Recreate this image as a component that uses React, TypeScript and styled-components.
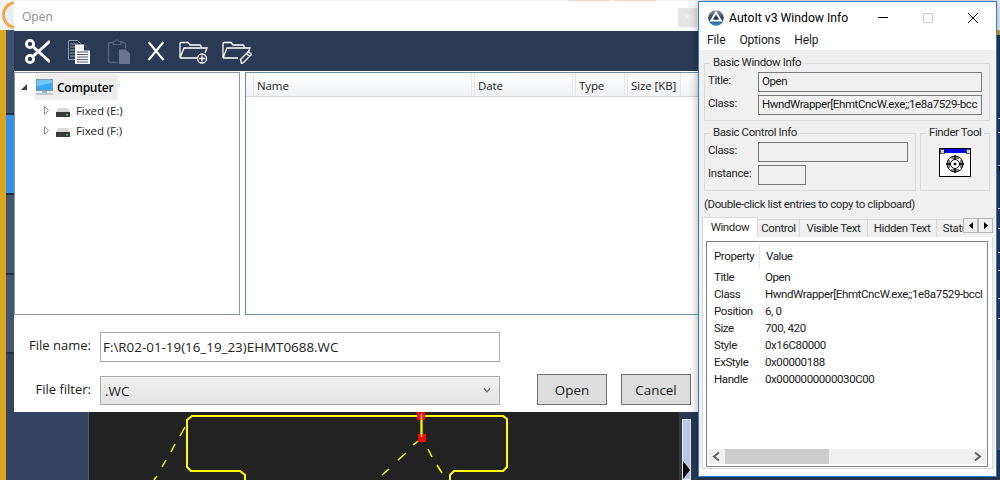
import React from "react";
import styled, { createGlobalStyle } from "styled-components";

const GlobalStyle = createGlobalStyle`
  html, body {
    margin: 0;
    padding: 0;
    background: #2a3954;
  }
  * {
    box-sizing: border-box;
  }
`;

const Desktop = styled.div`
  position: relative;
  width: 1000px;
  height: 480px;
  overflow: hidden;
  font-family: "Open Sans", "Noto Sans", sans-serif;
  font-size: 12px;
  color: #1a1a1a;
`;

/* the application behind the two windows */
const Backdrop = styled.div`
  width: 100%;
  height: 100%;
  display: grid;
  grid-template-columns: 6px 83px 590px 1fr;
  grid-template-rows: 30px 1fr;
`;
const TopStrip = styled.div`
  grid-column: 1 / -1;
  position: relative;
  background: #f4f4f4;
  overflow: hidden;
`;
const AppLogo = styled.div`
  width: 28px;
  height: 28px;
  margin: 1px 0 0 2px;
  border-radius: 50%;
  border: 3px solid #f0a848;
  background: #e8eef2;
`;
const TopTabs = styled.div`
  position: absolute;
  left: 568px;
  top: 0;
  display: flex;
  gap: 4px;
`;
const TopTab = styled.div`
  width: 42px;
  height: 1px;
  background: #f2d6c4;
`;
const GoldBar = styled.div`
  background: #daa520;
`;
const SideBar = styled.div`
  display: flex;
  flex-direction: column;
  background: linear-gradient(#2b3a55, #34435f 60px);
  border-right: 1px solid #4a5a78;
`;
const SideItem = styled.div<{ $height: number; $color: string }>`
  height: ${(p) => p.$height}px;
  background: ${(p) => p.$color};
  border-bottom: 2px solid #25324a;
`;
const Canvas = styled.div`
  background: #222222;
`;
const Rail = styled.div`
  display: flex;
  background: #2a3954;
  border-left: 2px solid #3a3a3a;
  padding-left: 1px;
`;
const RailThumb = styled.div`
  position: relative;
  width: 9px;
  height: 61px;
  margin-top: 389px;
  background: #b9c9e6;
  border: 1px solid #e4e9f4;
`;
const RailArrow = styled.div`
  position: absolute;
  left: 0;
  bottom: 0;
  border-left: 7px solid #000000;
  border-top: 9px solid transparent;
  border-bottom: 9px solid transparent;
`;
const EdgeMarks = styled.svg`
  margin-left: auto;
  width: 3px;
  height: 450px;
  flex: none;
`;

/* open dialog */
const Dialog = styled.div`
  position: absolute;
  left: 14px;
  top: 1px;
  width: 684px;
  height: 411px;
  display: flex;
  flex-direction: column;
  background: #ffffff;
`;
const DialogTitle = styled.div`
  height: 30px;
  flex: none;
  display: flex;
  align-items: center;
  justify-content: space-between;
  padding: 0 1px 0 8px;
  font-size: 12px;
  color: #8e8e8e;
`;
const DialogClose = styled.div`
  width: 19px;
  height: 19px;
  margin-top: 3px;
  background: #e5e5e5;
  color: #f6f6f6;
  font-size: 11px;
  line-height: 18px;
  text-align: center;
`;
const Toolbar = styled.div`
  height: 40px;
  flex: none;
  display: flex;
  align-items: center;
  gap: 14px;
  padding-left: 11px;
  background: #2a3954;
`;
const Panes = styled.div`
  height: 244px;
  flex: none;
  display: flex;
  gap: 5px;
  padding-top: 1px;
`;
const TreePane = styled.div`
  width: 226px;
  flex: none;
  padding: 1px 0 0 6px;
  border: 1px solid #8d96a6;
`;
const ListPane = styled.div`
  flex: 1;
  border: 1px solid #6a8db3;
  border-right: 0;
`;
const TreeRoot = styled.div`
  display: flex;
  align-items: center;
`;
const RootArrow = styled.div`
  width: 0;
  height: 0;
  margin-right: 8px;
  border-left: 6px solid transparent;
  border-bottom: 6px solid #404040;
`;
const RootLabel = styled.div`
  width: 83px;
  height: 26px;
  display: flex;
  align-items: center;
  gap: 4px;
  padding-left: 1px;
  background: #eeeeee;
  font-weight: 600;
  color: #000000;
  font-size: 12px;
  letter-spacing: -0.25px;
`;
const TreeChild = styled.div`
  height: 20px;
  display: flex;
  align-items: center;
  padding-left: 23px;
  color: #222222;
  font-size: 11.5px;
  letter-spacing: -0.1px;
`;
const ChildArrow = styled.svg`
  width: 5px;
  height: 9px;
  margin-right: 7px;
`;
const DriveIcon = styled.svg`
  width: 14px;
  height: 10px;
  margin-right: 6px;
  margin-top: 3px;
`;
const ListHeader = styled.div`
  height: 24px;
  display: flex;
  gap: 2px;
  padding-left: 7px;
  background: linear-gradient(#ffffff, #f0f1f3);
  border-bottom: 1px solid #d6d6d6;
`;
const HeaderCell = styled.div<{ $width: number }>`
  width: ${(p) => p.$width}px;
  display: flex;
  align-items: center;
  padding: 2px 0 0 3px;
  color: #222222;
  border-left: 1px solid #e6e6e6;
  border-right: 1px solid #e6e6e6;
  font-size: 11.5px;
  letter-spacing: -0.1px;
  white-space: nowrap;
`;
const DialogFooter = styled.div`
  display: grid;
  grid-template-columns: 77px 400px 98px 75px;
  grid-template-rows: 30px 29px;
  column-gap: 9px;
  row-gap: 14px;
  padding-top: 17px;
`;
const FieldLabel = styled.label`
  align-self: center;
  text-align: right;
  font-size: 13px;
  margin-top: -4px;
  color: #1a1a1a;
`;
const FileInput = styled.div`
  grid-column: 2 / span 3;
  width: 400px;
  border: 1px solid #ababab;
  padding: 0 0 1px 2px;
  display: flex;
  align-items: center;
  font-size: 13.4px;
  color: #222222;
`;
const FilterSelect = styled.div`
  display: flex;
  align-items: center;
  justify-content: space-between;
  padding: 0 8px 0 4px;
  border: 1px solid #ababab;
  background: linear-gradient(#f0f0f0, #e4e4e4);
  font-size: 13.4px;
  color: #222222;
`;
const DialogButton = styled.button`
  width: 70px;
  height: 31px;
  margin-top: -2px;
  justify-self: end;
  padding: 0;
  border: 1px solid #707070;
  background: #dddddd;
  font-family: inherit;
  font-size: 13.4px;
  color: #1a1a1a;
`;

/* autoit window */
const InfoWindow = styled.div`
  position: absolute;
  left: 698px;
  top: 1px;
  width: 299px;
  height: 476px;
  display: flex;
  flex-direction: column;
  border: 1px solid #2a7fd0;
  background: #ffffff;
  box-shadow: 0 0 9px rgba(0, 0, 0, 0.35);
  font-family: Roboto, "Noto Sans", sans-serif;
  font-size: 11.5px;
  letter-spacing: -0.4px;
`;
const InfoTitle = styled.div`
  height: 28px;
  flex: none;
  display: flex;
  align-items: center;
  padding: 3px 0 0 9px;
  font-size: 12.2px;
  letter-spacing: 0;
  color: #000000;
`;
const InfoTitleText = styled.div`
  margin-left: 5px;
  width: 149px;
  white-space: nowrap;
`;
const WindowControls = styled.div`
  display: flex;
  align-items: center;
  gap: 35px;
`;
const MinimizeGlyph = styled.div`
  width: 10px;
  height: 1px;
  background: #000000;
`;
const MaximizeGlyph = styled.div`
  width: 10px;
  height: 10px;
  border: 1px solid #cccccc;
`;
const CloseGlyph = styled.svg`
  width: 10px;
  height: 10px;
`;
const MenuBar = styled.div`
  height: 20px;
  flex: none;
  display: flex;
  align-items: center;
  gap: 14px;
  padding: 0 0 1px 8px;
  font-size: 12px;
  letter-spacing: -0.1px;
  color: #1a1a1a;
`;
const InfoBody = styled.div`
  height: 418px;
  flex: none;
  padding: 5px 6px 0 5px;
  background: #f0f0f0;
  color: #2a2a2a;
`;
const GroupRow = styled.div`
  display: flex;
  gap: 4px;
  margin-top: 4px;
`;
const Group = styled.fieldset<{ $width: number; $height: number }>`
  width: ${(p) => p.$width}px;
  height: ${(p) => p.$height}px;
  flex: none;
  margin: 0;
  padding: 1px 7px 0 3px;
  border: 1px solid #dcdcdc;
  min-width: 0;
`;
const GroupLegend = styled.legend`
  margin-left: 2px;
  padding: 0 3px;
  height: 16px;
  line-height: 15px;
  white-space: nowrap;
`;
const FieldRow = styled.div`
  display: flex;
  align-items: center;
  height: 20px;
  margin-bottom: 3px;
`;
const FieldName = styled.div`
  width: 50px;
  flex: none;
  margin-top: -5px;
`;
const ValueBox = styled.div<{ $width?: number }>`
  ${(p) => (p.$width ? `width: ${p.$width}px;` : "flex: 1;")}
  min-width: 0;
  height: 20px;
  padding-left: 3px;
  line-height: 16px;
  border: 1px solid #7a7a7a;
  white-space: nowrap;
  overflow: hidden;
  color: #1a1a1a;
`;
const FinderIcon = styled.svg`
  display: block;
  width: 32px;
  height: 29px;
  margin: 6px 0 0 15px;
`;
const Hint = styled.div`
  height: 16px;
  margin-top: 5px;
  line-height: 16px;
  white-space: nowrap;
`;
const TabStrip = styled.div`
  display: flex;
  align-items: flex-start;
  height: 20px;
  margin: 5px -3px 0 -2px;
`;
const TabList = styled.div`
  flex: 1;
  min-width: 0;
  height: 20px;
  display: flex;
  align-items: flex-end;
  overflow: hidden;
`;
const Tab = styled.div<{ $width: number; $active?: boolean }>`
  width: ${(p) => p.$width}px;
  flex: none;
  height: ${(p) => (p.$active ? 20 : 18)}px;
  display: flex;
  align-items: center;
  justify-content: center;
  padding-bottom: 1px;
  border: 1px solid #d9d9d9;
  border-bottom: 0;
  margin-right: -1px;
  background: ${(p) => (p.$active ? "#ffffff" : "#f0f0f0")};
  white-space: nowrap;
  overflow: hidden;
`;
const TabScroll = styled.div`
  display: flex;
  flex: none;
  margin-top: 1px;
`;
const TabScrollButton = styled.div`
  width: 15px;
  height: 15px;
  display: flex;
  align-items: center;
  justify-content: center;
  background: #f0f0f0;
  border: 1px solid #b5b5b5;
`;
const TabPanel = styled.div`
  height: 232px;
  margin: 0 -3px 0 -2px;
  padding: 4px 4px 0 3px;
  background: #ffffff;
  border: 1px solid #d9d9d9;
  border-top: 0;
`;
const PropertyList = styled.div`
  width: 282px;
  height: 226px;
  display: flex;
  flex-direction: column;
  padding: 1px;
  border: 1px solid #828282;
  color: #1a1a1a;
`;
const PropertyHead = styled.div`
  height: 25px;
  flex: none;
  display: grid;
  grid-template-columns: 45px 1fr;
  align-items: center;
  padding-left: 6px;
`;
const HeadCell = styled.div`
  &:nth-child(2) {
    padding-left: 6px;
    height: 24px;
    line-height: 24px;
    border-left: 1px solid #e5e5e5;
  }
`;
const PropertyRows = styled.div`
  flex: 1;
  min-height: 0;
`;
const PropertyRow = styled.div`
  height: 17px;
  display: grid;
  grid-template-columns: 45px 1fr;
  align-items: center;
  padding-left: 6px;
  white-space: nowrap;
  overflow: hidden;
`;
const PropertyValue = styled.div`
  padding-left: 6px;
  overflow: hidden;
`;
const ScrollBar = styled.div`
  height: 15px;
  flex: none;
  display: flex;
  align-items: center;
  background: #f0f0f0;
  margin-bottom: 1px;
`;
const ScrollArrow = styled.svg`
  width: 17px;
  height: 15px;
  flex: none;
`;
const ScrollThumb = styled.div`
  width: 104px;
  height: 15px;
  background: #cdcdcd;
  margin-right: auto;
`;

const SIDE_ITEMS = [
  { height: 85, color: "#3e4f70" },
  { height: 80, color: "#3490e8" },
  { height: 80, color: "#445473" },
  { height: 79, color: "#445473" },
];

const PROPERTIES = [
  ["Title", "Open"],
  ["Class", "HwndWrapper[EhmtCncW.exe;;1e8a7529-bccl"],
  ["Position", "6, 0"],
  ["Size", "700, 420"],
  ["Style", "0x16C80000"],
  ["ExStyle", "0x00000188"],
  ["Handle", "0x0000000000030C00"],
];

const ScissorsIcon = () => (
  <svg width="25" height="25" viewBox="0 0 25 25" fill="none" stroke="#fff" strokeWidth="2.8">
    <circle cx="5" cy="5" r="3.6" />
    <circle cx="5" cy="20" r="3.6" />
    <path d="M7.600 7.400L25 23M7.600 17.600L25 2" />
  </svg>
);

const CopyIcon = () => (
  <svg width="29" height="25" viewBox="0 0 29 25">
    <path d="M4.500 1.500h9l4 4v15h-13z" fill="#2a3954" stroke="#8f99aa" />
    <path d="M6 5h8M6 8h8M6 11h8M6 14h8M6 17h8" stroke="#8f99aa" />
    <path d="M11 5.500h9l6 6v13.500h-15z" fill="#f4f4f4" />
    <path d="M20 5.500v6h6z" fill="#2a3954" />
    <path d="M13 13h11M13 15.500h11M13 18h11M13 20.500h11M13 23h11" stroke="#59667d" />
  </svg>
);

const PasteIcon = () => (
  <svg width="26" height="25" viewBox="0 0 26 25">
    <path
      d="M7 3.500H3.500q-2 0-2 2v16q0 2 2 2h7M13 3.500h3.500q2 0 2 2v4"
      fill="none"
      stroke="#55637e"
      strokeWidth="1.500"
    />
    <path d="M6 5.500v-3h2l1-1.500h2l1 1.500h2v3z" fill="none" stroke="#55637e" />
    <path d="M12 10.500h7l4 4v10.500h-11z" fill="#6a778f" />
  </svg>
);

const CrossIcon = () => (
  <svg width="18" height="20" viewBox="0 0 18 20" fill="none" stroke="#fff" strokeWidth="2.100">
    <path d="M1.500 1L16.500 19M16.500 1L1.500 19" />
  </svg>
);

const FolderAddIcon = () => (
  <svg width="29" height="25" viewBox="0 0 29 25" fill="none" stroke="#fff" strokeWidth="1.300">
    <path d="M1 19V4.500q0-1 1-1h7l2 2.500h10q1 0 1 1v2M1 19L5 9h23l-2 5M1 19h17" />
    <circle cx="23" cy="19.500" r="4.500" />
    <path d="M23 16.500v6M20 19.500h6" />
  </svg>
);

const FolderEditIcon = () => (
  <svg width="30" height="25" viewBox="0 0 30 25" fill="none" stroke="#fff" strokeWidth="1.300">
    <path d="M1 19V4.500q0-1 1-1h7l2 2.500h10q1 0 1 1v2M1 19L5 9h23l-2 5M1 19h15" />
    <path d="M19.500 24.500l-1-4 8-8 3 3-8 8zM24.500 14.500l3 3" />
  </svg>
);

const MonitorIcon = () => (
  <svg width="17" height="16" viewBox="0 0 17 16">
    <rect x="0.500" y="0.500" width="16" height="11" fill="#3aa8f0" stroke="#7f97ac" />
    <path d="M1 1h15v3L1 7z" fill="#72c6f6" />
    <path d="M6 12h5v2H6z" fill="#a9b6c1" />
    <path d="M0 15h17" stroke="#8fa3b6" />
  </svg>
);

const Expander = () => (
  <ChildArrow viewBox="0 0 5 9" fill="#fff" stroke="#8c8c8c">
    <path d="M0.500 0.700L4.500 4.500L0.500 8.300z" />
  </ChildArrow>
);

const Drive = () => (
  <DriveIcon viewBox="0 0 14 10">
    <path d="M2 1h10l2 4H0z" fill="#d9d9d9" />
    <rect x="0" y="5" width="14" height="5" fill="#3a3a3a" />
    <rect x="10" y="7" width="2" height="1.500" fill="#3cdc50" />
  </DriveIcon>
);

const AutoItLogo = () => (
  <svg width="16" height="16" viewBox="0 0 16 16">
    <defs>
      <linearGradient id="autoit-ball" x1="0" y1="0" x2="0" y2="1">
        <stop offset="0" stopColor="#8a97a8" />
        <stop offset="0.5" stopColor="#2c3f5c" />
        <stop offset="1" stopColor="#2d8fd8" />
      </linearGradient>
    </defs>
    <circle cx="8" cy="8" r="7.800" fill="url(#autoit-ball)" />
    <path d="M8 2.500L13 10.500H3z" fill="none" stroke="#fff" strokeWidth="1.800" />
    <path d="M8 6.500L10 9.500H6z" fill="#1d2b42" />
  </svg>
);

const FinderGlyph = () => (
  <FinderIcon viewBox="0 0 32 29" shapeRendering="crispEdges">
    <rect x="0.500" y="0.500" width="31" height="28" fill="#fff" stroke="#000" />
    <rect x="1" y="1" width="30" height="4" fill="#0000f0" />
    <rect x="1" y="1" width="4" height="4" fill="#d0d0d0" stroke="#000" strokeWidth="0.600" />
    <rect x="27" y="1" width="4" height="4" fill="#d0d0d0" stroke="#000" strokeWidth="0.600" />
    <g fill="none" stroke="#000" shapeRendering="auto">
      <circle cx="16" cy="16" r="8" strokeWidth="1" />
      <circle cx="16" cy="16" r="4.500" strokeWidth="1" />
      <path d="M16 7v5M16 20v5M7 16h5M20 16h5" strokeWidth="1.400" />
      <path d="M12 10h8M12 22h8M10 12v8M22 12v8" strokeWidth="1" />
      <circle cx="16" cy="16" r="1" fill="#000" />
    </g>
  </FinderIcon>
);

const CanvasDrawing = styled.svg`
  display: block;
  width: 100%;
  height: 100%;
`;

const Drawing = () => (
  <CanvasDrawing viewBox="89 30 590 450">
    <g fill="none" stroke="#ffff00" strokeWidth="1.500">
      <path
        strokeWidth="2"
        d="M245 480V475L240 471H191L187 467V420L192 416H503L507 419V467L503 471H454L450 475V480"
      />
      <path strokeWidth="2" d="M421.500 416V437" />
      <path d="M185 427L180 436M175 444L171 452M166 460L162 467M157 476L154 480" />
      <path d="M413 445L423 437.500M398 460L406 453M382 475L389 469" />
      <path d="M428 449L432 457M437 465L442 473" />
    </g>
    <rect x="417" y="412" width="8" height="8" fill="#ff0000" />
    <rect x="418" y="434" width="8" height="8" fill="#ff0000" />
    <path d="M421.500 414V437" stroke="#ffff00" strokeWidth="1.500" />
  </CanvasDrawing>
);

export default function App() {
  return (
    <Desktop>
      <GlobalStyle />
      <Backdrop>
        <TopStrip>
          <AppLogo />
          <TopTabs>
            <TopTab />
            <TopTab />
          </TopTabs>
        </TopStrip>
        <GoldBar />
        <SideBar>
          {SIDE_ITEMS.map((item, i) => (
            <SideItem key={i} $height={item.height} $color={item.color} />
          ))}
        </SideBar>
        <Canvas>
          <Drawing />
        </Canvas>
        <Rail>
          <RailThumb>
            <RailArrow />
          </RailThumb>
          <EdgeMarks viewBox="0 0 3 450" shapeRendering="crispEdges">
            <path d="M0 0h3v5H0z" fill="#daa520" />
            <path
              d="M1 88h2M1 102h2M1 135h2v8M1 178h2M1 198h2M1 222h2M1 240h2M1 268h2M1 288h2"
              stroke="#d5dbe5"
            />
            <path d="M0 330h3v90H0z" fill="#5d6068" />
          </EdgeMarks>
        </Rail>
      </Backdrop>

      <Dialog>
        <DialogTitle>
          Open
          <DialogClose>×</DialogClose>
        </DialogTitle>
        <Toolbar>
          <ScissorsIcon />
          <CopyIcon />
          <PasteIcon />
          <CrossIcon />
          <FolderAddIcon />
          <FolderEditIcon />
        </Toolbar>
        <Panes>
          <TreePane>
            <TreeRoot>
              <RootArrow />
              <RootLabel>
                <MonitorIcon />
                Computer
              </RootLabel>
            </TreeRoot>
            <TreeChild>
              <Expander />
              <Drive />
              Fixed (E:)
            </TreeChild>
            <TreeChild>
              <Expander />
              <Drive />
              Fixed (F:)
            </TreeChild>
          </TreePane>
          <ListPane>
            <ListHeader>
              <HeaderCell $width={219}>Name</HeaderCell>
              <HeaderCell $width={99}>Date</HeaderCell>
              <HeaderCell $width={50}>Type</HeaderCell>
              <HeaderCell $width={54}>Size [KB]</HeaderCell>
            </ListHeader>
          </ListPane>
        </Panes>
        <DialogFooter>
          <FieldLabel>File name:</FieldLabel>
          <FileInput>F:\R02-01-19(16_19_23)EHMT0688.WC</FileInput>
          <FieldLabel>File filter:</FieldLabel>
          <FilterSelect>
            .WC
            <svg width="8" height="5" viewBox="0 0 8 5" fill="none" stroke="#666" strokeWidth="1.200">
              <path d="M1 0.500L4 3.800L7 0.500" />
            </svg>
          </FilterSelect>
          <DialogButton>Open</DialogButton>
          <DialogButton>Cancel</DialogButton>
        </DialogFooter>
      </Dialog>

      <InfoWindow>
        <InfoTitle>
          <AutoItLogo />
          <InfoTitleText>AutoIt v3 Window Info</InfoTitleText>
          <WindowControls>
            <MinimizeGlyph />
            <MaximizeGlyph />
            <CloseGlyph viewBox="0 0 10 10" stroke="#000" fill="none">
              <path d="M0 0L10 10M10 0L0 10" />
            </CloseGlyph>
          </WindowControls>
        </InfoTitle>
        <MenuBar>
          <span>File</span>
          <span>Options</span>
          <span>Help</span>
        </MenuBar>
        <InfoBody>
          <Group $width={286} $height={66}>
            <GroupLegend>Basic Window Info</GroupLegend>
            <FieldRow>
              <FieldName>Title:</FieldName>
              <ValueBox>Open</ValueBox>
            </FieldRow>
            <FieldRow>
              <FieldName>Class:</FieldName>
              <ValueBox>HwndWrapper[EhmtCncW.exe;;1e8a7529-bcc</ValueBox>
            </FieldRow>
          </Group>
          <GroupRow>
            <Group $width={212} $height={66}>
              <GroupLegend>Basic Control Info</GroupLegend>
              <FieldRow>
                <FieldName>Class:</FieldName>
                <ValueBox $width={150} />
              </FieldRow>
              <FieldRow>
                <FieldName>Instance:</FieldName>
                <ValueBox $width={48} />
              </FieldRow>
            </Group>
            <Group $width={70} $height={66}>
              <GroupLegend>Finder Tool</GroupLegend>
              <FinderGlyph />
            </Group>
          </GroupRow>
          <Hint>(Double-click list entries to copy to clipboard)</Hint>
          <TabStrip>
            <TabList>
              <Tab $width={56} $active>
                Window
              </Tab>
              <Tab $width={43}>Control</Tab>
              <Tab $width={69}>Visible Text</Tab>
              <Tab $width={70}>Hidden Text</Tab>
              <Tab $width={44}>Status</Tab>
            </TabList>
            <TabScroll>
              <TabScrollButton>
                <svg width="4" height="7" viewBox="0 0 4 7">
                  <path d="M4 0v7L0 3.500z" fill="#000" />
                </svg>
              </TabScrollButton>
              <TabScrollButton>
                <svg width="4" height="7" viewBox="0 0 4 7">
                  <path d="M0 0v7l4-3.500z" fill="#000" />
                </svg>
              </TabScrollButton>
            </TabScroll>
          </TabStrip>
          <TabPanel>
            <PropertyList>
              <PropertyHead>
                <HeadCell>Property</HeadCell>
                <HeadCell>Value</HeadCell>
              </PropertyHead>
              <PropertyRows>
                {PROPERTIES.map(([name, value]) => (
                  <PropertyRow key={name}>
                    <div>{name}</div>
                    <PropertyValue>{value}</PropertyValue>
                  </PropertyRow>
                ))}
              </PropertyRows>
              <ScrollBar>
                <ScrollArrow viewBox="0 0 17 15" fill="none" stroke="#606060" strokeWidth="2">
                  <path d="M11 3.500L6 7.500L11 11.500" />
                </ScrollArrow>
                <ScrollThumb />
                <ScrollArrow viewBox="0 0 17 15" fill="none" stroke="#606060" strokeWidth="2">
                  <path d="M6 3.500L11 7.500L6 11.500" />
                </ScrollArrow>
              </ScrollBar>
            </PropertyList>
          </TabPanel>
        </InfoBody>
      </InfoWindow>
    </Desktop>
  );
}
